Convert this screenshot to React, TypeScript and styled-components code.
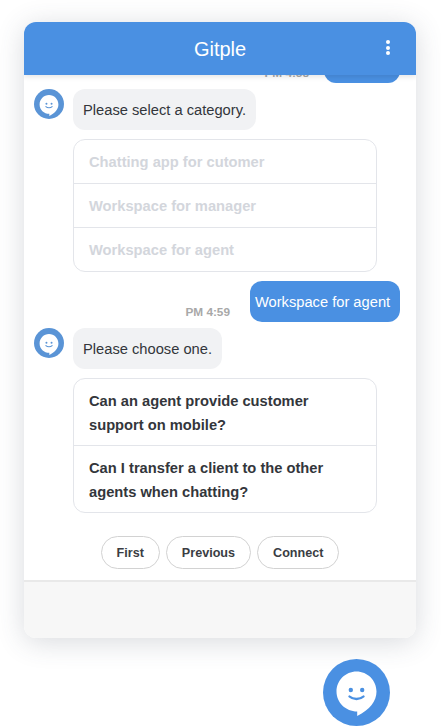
import React, { FC } from "react";
import styled, { createGlobalStyle } from "styled-components";

const GlobalStyle = createGlobalStyle`
  html, body {
    margin: 0;
    padding: 0;
    height: 100%;
    background: #fff;
    overflow: hidden;
  }
  body {
    font-family: "Liberation Sans", Arial, sans-serif;
  }
  * {
    box-sizing: border-box;
  }
`;

const Page = styled.div`
  width: 441px;
  height: 726px;
  padding: 22px 25px 0 24px;
  display: flex;
  flex-direction: column;
  overflow: hidden;
`;

const ChatWindow = styled.div`
  width: 392px;
  height: 616px;
  flex: none;
  display: flex;
  flex-direction: column;
  border-radius: 12px;
  background: #fff;
  box-shadow: 0 4px 28px rgba(60, 70, 90, 0.2);
  overflow: hidden;
`;

const Header = styled.div`
  position: relative;
  z-index: 1;
  height: 53px;
  flex: none;
  display: flex;
  align-items: center;
  justify-content: center;
  background: #4a90e2;
  color: #fff;
  font-size: 20px;
  padding-top: 1px;
  box-shadow: 0 2px 5px rgba(0, 0, 0, 0.1);
`;

const MenuDots = styled.div`
  position: absolute;
  right: 26px;
  top: 18px;
  display: flex;
  flex-direction: column;
  gap: 1.5px;
  span {
    width: 4px;
    height: 4px;
    border-radius: 50%;
    background: #fff;
  }
`;

const Messages = styled.div`
  height: 505px;
  flex: none;
  display: flex;
  flex-direction: column;
  justify-content: flex-end;
  padding: 0 16px 11px 10px;
  overflow: hidden;
`;

const UserRow = styled.div<{ $timeGap: number }>`
  display: flex;
  justify-content: flex-end;
  align-items: flex-end;
  gap: ${(p) => p.$timeGap}px;
  margin-bottom: 6px;
  flex: none;
`;

const Time = styled.span`
  font-size: 11.8px;
  font-weight: 700;
  color: #a8a8a8;
  margin-bottom: 3px;
`;

const UserBubble = styled.div<{ $width: number }>`
  width: ${(p) => p.$width}px;
  height: 41px;
  padding-right: 5px;
  display: flex;
  align-items: center;
  justify-content: center;
  border-radius: 12px;
  background: #4a90e2;
  color: #fff;
  font-size: 14.7px;
  white-space: nowrap;
`;

const BotRow = styled.div`
  display: flex;
  gap: 9px;
  margin-bottom: 9px;
  flex: none;
`;

const Avatar = styled.div`
  width: 30px;
  height: 30px;
  flex: none;
  svg {
    display: block;
  }
`;

const BotBubble = styled.div`
  height: 41px;
  padding: 0 10px;
  display: flex;
  align-items: center;
  border-radius: 12px;
  background: #f1f2f4;
  color: #33363b;
  font-size: 14.7px;
`;

const OptionCard = styled.div<{ $gap: number }>`
  width: 304px;
  margin-left: 39px;
  margin-bottom: ${(p) => p.$gap}px;
  flex: none;
  border: 1px solid #e3e5ea;
  border-radius: 12px;
  background: #fff;
`;

const Option = styled.div<{ $disabled?: boolean }>`
  padding: ${(p) => (p.$disabled ? "14px 15px 12px" : "10px 15px 8px")};
  font-size: 14.7px;
  font-weight: 700;
  line-height: ${(p) => (p.$disabled ? "17px" : "24px")};
  color: ${(p) => (p.$disabled ? "#d3d6dc" : "#33363b")};
  & + & {
    border-top: 1px solid #e3e5ea;
  }
`;

const Actions = styled.div`
  display: flex;
  justify-content: center;
  gap: 6px;
  padding-left: 6px;
  flex: none;
`;

const ActionButton = styled.button`
  height: 33px;
  padding: 1px 15px 0;
  border: 1px solid #d2d2d2;
  border-radius: 17px;
  background: #fff;
  color: #3a3d43;
  font-family: inherit;
  font-size: 12.6px;
  font-weight: 700;
`;

const Footer = styled.div`
  flex: 1;
  border-top: 2px solid #e9e9e9;
  background: #f7f7f7;
`;

const Launcher = styled.div`
  width: 67px;
  height: 67px;
  flex: none;
  margin: 21px 0 0 299px;
  svg {
    display: block;
  }
`;

// the small avatar draws its white bubble bigger and lower than the launcher
const GitpleFace: FC<{ size: number; fill: string; scale?: number; drop?: number }> = ({
  size,
  fill,
  scale = 1,
  drop = 0,
}) => (
  <svg width={size} height={size} viewBox="0 0 67 67">
    <circle cx="33.5" cy="33.5" r="33.5" fill={fill} />
    <g transform={`translate(0 ${drop})`}>
      <path
        transform={`translate(33.5 33.5) scale(${scale}) translate(-33.5 -33.5)`}
        d="M33.5 12.5C44.5 12.5 53.5 21.4 53.5 32.5C53.5 42 47 50.5 34.2 57V52.5C22.8 52.5 13.5 43.6 13.5 32.5C13.5 21.4 22.5 12.5 33.5 12.5Z"
        fill="#fff"
      />
      <circle cx="27.8" cy="31" r="2.2" fill={fill} />
      <circle cx="39.2" cy="31" r="2.2" fill={fill} />
      <path
        d="M26.5 37.5C30 40.8 37 40.8 40.5 37.5"
        fill="none"
        stroke={fill}
        strokeWidth="2.4"
        strokeLinecap="round"
      />
    </g>
  </svg>
);

const BotMessage: FC<{ text: string }> = ({ text }) => (
  <BotRow>
    <Avatar>
      <GitpleFace size={30} fill="#5a94d6" scale={1.05} drop={2} />
    </Avatar>
    <BotBubble>{text}</BotBubble>
  </BotRow>
);

export default function App() {
  return (
    <Page>
      <GlobalStyle />
      <ChatWindow>
        <Header>
          Gitple
          <MenuDots>
            <span />
            <span />
            <span />
          </MenuDots>
        </Header>
        <Messages>
          <UserRow $timeGap={15}>
            <Time>PM 4:58</Time>
            <UserBubble $width={76} />
          </UserRow>
          <BotMessage text="Please select a category." />
          <OptionCard $gap={9}>
            <Option $disabled>Chatting app for cutomer</Option>
            <Option $disabled>Workspace for manager</Option>
            <Option $disabled>Workspace for agent</Option>
          </OptionCard>
          <UserRow $timeGap={20}>
            <Time>PM 4:59</Time>
            <UserBubble $width={150}>Workspace for agent</UserBubble>
          </UserRow>
          <BotMessage text="Please choose one." />
          <OptionCard $gap={23}>
            <Option>Can an agent provide customer support on mobile?</Option>
            <Option>Can I transfer a client to the other agents when chatting?</Option>
          </OptionCard>
          <Actions>
            <ActionButton>First</ActionButton>
            <ActionButton>Previous</ActionButton>
            <ActionButton>Connect</ActionButton>
          </Actions>
        </Messages>
        <Footer />
      </ChatWindow>
      <Launcher>
        <GitpleFace size={67} fill="#4a90e2" />
      </Launcher>
    </Page>
  );
}
